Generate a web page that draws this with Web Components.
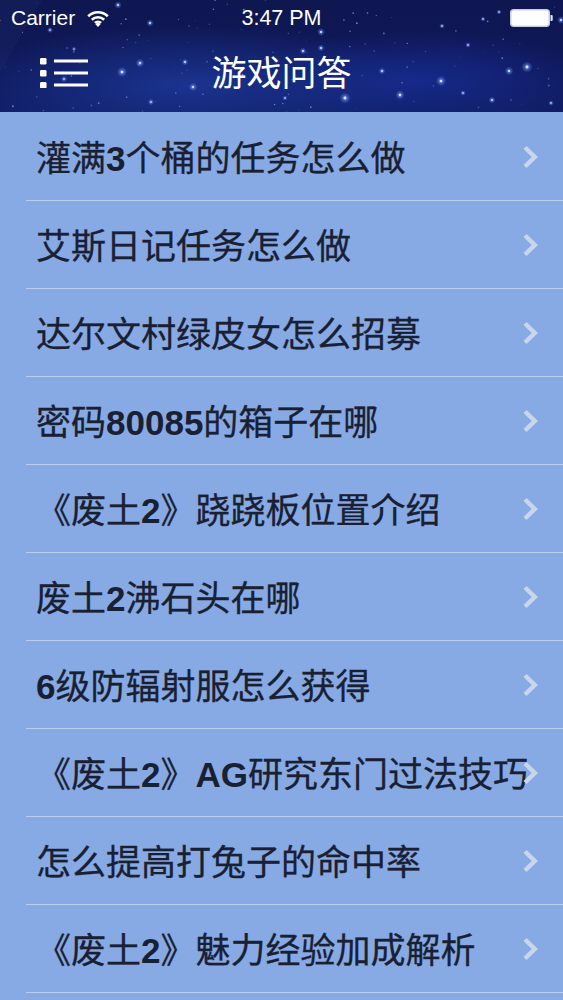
<!DOCTYPE html>
<html>
<head>
<meta charset="utf-8">
<style>
  html, body { margin: 0; height: 1000px; overflow: hidden; background: #87a9e4; }
  body { font-family: "Liberation Sans", "Noto Sans CJK SC", sans-serif; }
</style>
</head>
<body>
<game-header heading="游戏问答"></game-header>
<question-list>
  <question-row>灌满<b>3</b>个桶的任务怎么做</question-row>
  <question-row>艾斯日记任务怎么做</question-row>
  <question-row>达尔文村绿皮女怎么招募</question-row>
  <question-row>密码<b>80085</b>的箱子在哪</question-row>
  <question-row>《废土<b>2</b>》跷跷板位置介绍</question-row>
  <question-row>废土<b>2</b>沸石头在哪</question-row>
  <question-row><b>6</b>级防辐射服怎么获得</question-row>
  <question-row>《废土<b>2</b>》<b>AG</b>研究东门过法技巧</question-row>
  <question-row>怎么提高打兔子的命中率</question-row>
  <question-row>《废土<b>2</b>》魅力经验加成解析</question-row>
</question-list>

<script>
// bright stars read off the reference, the rest is seeded filler
const STARS = [
  [122,72,2.4],[140,63,2],[193,87,2],[185,62,1.6],[345,98,2.6],[400,95,2.2],[441,81,2.4],
  [527,67,2.6],[509,71,2],[382,71,1.6],[321,32,1.8],[321,48,1.6],[303,51,1.6],[150,23,1.7],
  [118,5,1.7],[492,100,1.6],[463,93,1.3],[468,45,1.3],[442,26,1.3],[483,19,1.2],[499,12,1.2],
  [551,103,1.3],[561,20,1.8],[151,102,1.5],[64,79,1.5],[50,30,1.4],[74,49,1.1],[285,98,1.2]
];

function starField() {
  let seed = 47;
  const rnd = () => (seed = (seed * 16807) % 2147483647) / 2147483647;
  let dots = '';
  STARS.forEach(([x, y, r]) => {
    dots += `<circle cx="${x}" cy="${y}" r="${r * 2.2}" fill="url(#glow)"/><circle cx="${x}" cy="${y}" r="${r * 0.55}" fill="#dbe6ff"/>`;
  });
  for (let i = 0; i < 110; i++) {
    const x = (rnd() * 563).toFixed(1), y = (rnd() * 112).toFixed(1);
    dots += `<circle cx="${x}" cy="${y}" r="${(0.4 + rnd() * 0.6).toFixed(2)}" fill="#a9bdf5" opacity="${(0.2 + rnd() * 0.5).toFixed(2)}"/>`;
  }
  return dots;
}

class GameHeader extends HTMLElement {
  constructor() {
    super();
    this.attachShadow({mode: 'open'});
    this.shadowRoot.innerHTML = `
      <style>
        :host { display: block; position: relative; height: 112px; overflow: hidden; color: #fff;
          background:
            radial-gradient(ellipse 240px 60px at 190px 85px, #1a3490 0%, rgba(26,52,144,0) 100%),
            radial-gradient(ellipse 180px 50px at 420px 80px, #16298a 0%, rgba(22,41,138,0) 100%),
            linear-gradient(#0e1750, #0e1858 60%, #101d64); }
        .sky { position: absolute; inset: 0; }
        .status { position: relative; height: 36px; padding: 0 10px 0 11px; display: flex; align-items: center; font-size: 21px; }
        .carrier { width: 76px; }
        .time { position: absolute; left: 0; right: 0; text-align: center; font-size: 21.5px; }
        .battery { margin-left: auto; }
        .nav { position: relative; height: 76px; display: flex; align-items: flex-start; justify-content: center; }
        .menu { position: absolute; left: 40px; top: 22px; }
        h1 { margin: 15px 0 0; font-size: 35px; line-height: 46px; font-weight: 400; }
      </style>
      <svg class="sky" width="563" height="112" viewBox="0 0 563 112">
        <defs>
          <radialGradient id="glow">
            <stop offset="0" stop-color="#8fb0ff" stop-opacity=".85"/>
            <stop offset="1" stop-color="#4f78f0" stop-opacity="0"/>
          </radialGradient>
        </defs>
        <path d="M0 72 L42 0 L0 0Z" fill="#2a3f86" opacity=".14"/>
        ${starField()}
      </svg>
      <div class="status">
        <span class="carrier">Carrier</span>
        <svg width="22" height="17" viewBox="0 0 22 17">
          <path d="M1.2 6.2 A14 14 0 0 1 20.8 6.2 M4.8 9.8 A9 9 0 0 1 17.2 9.8 M7.9 12.9 A4.6 4.6 0 0 1 14.1 12.9" fill="none" stroke="#fff" stroke-width="2.6"/>
          <path d="M11 17 L8.4 14.2 A3.6 3.6 0 0 1 13.6 14.2Z" fill="#fff"/>
        </svg>
        <span class="time">3:47 PM</span>
        <svg class="battery" width="43" height="18" viewBox="0 0 43 18">
          <rect x=".75" y=".75" width="38.5" height="16.5" rx="3" fill="#fff" stroke="#c9cfe0" stroke-width="1.5"/>
          <path d="M40.5 6 h1.2 a1 1 0 0 1 1 1 v4 a1 1 0 0 1 -1 1 h-1.2z" fill="#dfe6f5"/>
        </svg>
      </div>
      <div class="nav">
        <svg class="menu" width="48" height="30" viewBox="0 0 48 30" fill="#fff">
          <rect x="0" y="0" width="6.5" height="6.5" rx="1.2"/>
          <rect x="0" y="12" width="6.5" height="6.5" rx="1.2"/>
          <rect x="0" y="24" width="6.5" height="6.5" rx="1.2"/>
          <rect x="14" y="1.5" width="34" height="3"/>
          <rect x="14" y="13.5" width="34" height="3"/>
          <rect x="14" y="25.5" width="34" height="3"/>
        </svg>
        <h1>${this.getAttribute('heading')}</h1>
      </div>`;
  }
}
customElements.define('game-header', GameHeader);

class QuestionList extends HTMLElement {
  constructor() {
    super();
    this.attachShadow({mode: 'open'});
    this.shadowRoot.innerHTML = `
      <style>
        :host { display: flex; flex-direction: column; padding-top: 1px; background: #87a9e4; }
      </style>
      <slot></slot>`;
  }
}
customElements.define('question-list', QuestionList);

class QuestionRow extends HTMLElement {
  constructor() {
    super();
    this.attachShadow({mode: 'open'});
    this.shadowRoot.innerHTML = `
      <style>
        :host { display: block; padding-left: 26px; color: #182032; }
        .row { height: 87px; border-bottom: 1px solid #b9cdf0; display: flex; align-items: center;
          position: relative; padding-left: 10px; font-size: 35px; white-space: nowrap; }
        .text { -webkit-text-stroke: .3px #182032; position: relative; top: -1px; }
        .chev { position: absolute; left: 496px; top: 32px; }
        ::slotted(b) { font-weight: 700; -webkit-text-stroke: 0; }
      </style>
      <div class="row">
        <span class="text"><slot></slot></span>
        <svg class="chev" width="16" height="24" viewBox="0 0 16 24">
          <path d="M3 2.5 L12.8 12 L3 21.5" fill="none" stroke="#c8d5ec" stroke-width="4.4"/>
        </svg>
      </div>`;
  }
}
customElements.define('question-row', QuestionRow);
</script>
</body>
</html>
